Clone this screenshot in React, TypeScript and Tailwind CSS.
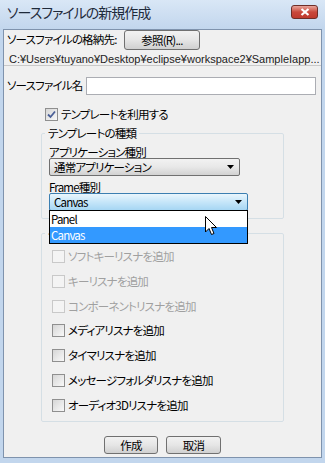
import React from "react";

const font = "font-['Noto_Sans_CJK_JP','Noto_Sans',sans-serif] [font-feature-settings:'palt']";

function Check({ label, checked = false, disabled = false }: { label: string; checked?: boolean; disabled?: boolean }) {
  return (
    <div className="flex items-center h-[13px]">
      <span
        className={
          "w-[13px] h-[13px] flex items-center justify-center border " +
          (disabled
            ? "border-[#c9c9c9] bg-[#f4f4f4]"
            : "border-[#8f8f8f] bg-gradient-to-br from-[#d6d6d6] to-[#f9f9f9]")
        }
      >
        {checked && (
          <svg width="9" height="9" viewBox="0 0 9 9">
            <path d="M1 4.5 L3.5 7 L8 1.5" fill="none" stroke="#4a5f97" strokeWidth="1.8" />
          </svg>
        )}
      </span>
      <span className={"ml-[3px] leading-[13px] " + (disabled ? "text-[#a0a0a0]" : "text-black")}>{label}</span>
    </div>
  );
}

function Arrow() {
  return (
    <svg width="7" height="4" viewBox="0 0 7 4" className="ml-auto mr-[5px]">
      <path d="M0 0 H7 L3.5 4 Z" fill="#000" />
    </svg>
  );
}

export default function App() {
  return (
    <div className={"w-[325px] h-[463px] bg-[#c2d6ed] flex flex-col px-[3px] pb-[5px] text-[11.5px] tracking-[-0.8px] text-black " + font}>
      {/* タイトルバー */}
      <div className="h-[29px] flex items-start pt-[4px] bg-gradient-to-b from-[#d9e7f6] to-[#c2d6ed] -mx-[3px] px-[7px]">
        <span className="text-[14px] tracking-[-1px] leading-[16px] text-[#1e2a3a]">ソースファイルの新規作成</span>
        <span className="ml-auto mt-[1px] w-[27px] h-[14px] rounded-[3px] border border-[#6e2e28] bg-gradient-to-b from-[#e7a49a] via-[#c9483c] to-[#bf3a2e] flex items-center justify-center">
          <svg width="10" height="8" viewBox="0 0 10 8">
            <path d="M1.5 1 L8.5 7 M8.5 1 L1.5 7" stroke="#fff" strokeWidth="2.2" />
          </svg>
        </span>
      </div>

      {/* クライアント領域 */}
      <div className="flex-1 bg-[#f0f0f0] border border-[#7f93ad] flex flex-col">
        <div className="flex items-center h-[20px]">
          <span className="pl-[3px] w-[120px] whitespace-nowrap">ソースファイルの格納先:</span>
          <button className="w-[76px] h-[20px] rounded-[3px] border border-[#707070] bg-gradient-to-b from-[#f2f2f2] via-[#e6e6e6] to-[#d0d0d0] leading-[18px]">
            参照(R)...
          </button>
        </div>

        <div className="mt-[3px] h-[12px] overflow-hidden pl-[5px] font-['Liberation_Sans',sans-serif] text-[11px] tracking-normal leading-[12px] whitespace-nowrap text-[#222]">
          C:¥Users¥tuyano¥Desktop¥eclipse¥workspace2¥SampleIapp...
        </div>
        <div className="h-px bg-[#c9c9c9]" />

        <div className="flex items-center mt-[11px] h-[18px]">
          <span className="pl-[3px] w-[82px] whitespace-nowrap">ソースファイル名</span>
          <div className="w-[230px] h-[18px] border border-[#abadb3] bg-white" />
        </div>

        <div className="mt-[13px] pl-[41px]">
          <Check label="テンプレートを利用する" checked />
        </div>

        <fieldset className="ml-[37px] w-[243px] mt-[6px] border border-[#d5dfe5] rounded-[2px] p-0">
          <legend className="ml-[3px] px-[3px] leading-[12px]">テンプレートの種類</legend>
          <div className="pl-[7px] pt-[7px] pb-[7px] flex flex-col">
            <span className="leading-[12px]">アプリケーション種別</span>
            <div className="w-[191px] h-[18px] rounded-[2px] border border-[#707070] bg-gradient-to-b from-[#f2f2f2] via-[#e8e8e8] to-[#d2d2d2] flex items-center pl-[4px]">
              <span className="leading-[16px]">通常アプリケーション</span>
              <Arrow />
            </div>
            <span className="leading-[12px] mt-[5px]">Frame種別</span>
            <div className="relative w-[199px]">
              <div className="h-[18px] rounded-[2px] border border-[#3c7fb1] bg-gradient-to-b from-[#eaf6fd] via-[#c6e6f9] to-[#a6d6f3] flex items-center pl-[4px]">
                <span className="leading-[16px]">Canvas</span>
                <Arrow />
              </div>
              <div className="absolute left-0 top-[17px] w-[199px] border border-black bg-white z-10 flex flex-col">
                <span className="h-[16px] leading-[16px] pl-[1px]">Panel</span>
                <span className="h-[16px] leading-[16px] pl-[1px] bg-[#3399ff] text-white">Canvas</span>
              </div>
              <svg width="13" height="20" viewBox="0 0 13 20" className="absolute left-[156px] top-[23px] z-20">
                <path d="M0.5 0.5 V16 L4 12.5 L6.5 18.5 L9 17.5 L6.5 11.5 H11.5 Z" fill="#fff" stroke="#000" strokeWidth="1" />
              </svg>
            </div>
          </div>
        </fieldset>

        <fieldset className="ml-[37px] w-[243px] mt-[8px] border border-[#d5dfe5] rounded-[2px] p-0">
          <legend className="ml-[3px] px-[3px] leading-[12px]">イベントリスナ</legend>
          <div className="pl-[10px] pt-[11px] pb-[9px] flex flex-col gap-[11.75px]">
            <Check label="ソフトキーリスナを追加" disabled />
            <Check label="キーリスナを追加" disabled />
            <Check label="コンポーネントリスナを追加" disabled />
            <Check label="メディアリスナを追加" />
            <Check label="タイマリスナを追加" />
            <Check label="メッセージフォルダリスナを追加" />
            <Check label="オーディオ3Dリスナを追加" />
          </div>
        </fieldset>

        <div className="mt-auto mb-[3px] flex justify-center gap-[8px]">
          <button className="w-[54px] h-[18px] rounded-[3px] border border-[#707070] bg-gradient-to-b from-[#f2f2f2] via-[#e6e6e6] to-[#d0d0d0] leading-[16px]">
            作成
          </button>
          <button className="w-[55px] h-[18px] rounded-[3px] border border-[#707070] bg-gradient-to-b from-[#f2f2f2] via-[#e6e6e6] to-[#d0d0d0] leading-[16px]">
            取消
          </button>
        </div>
      </div>
    </div>
  );
}
